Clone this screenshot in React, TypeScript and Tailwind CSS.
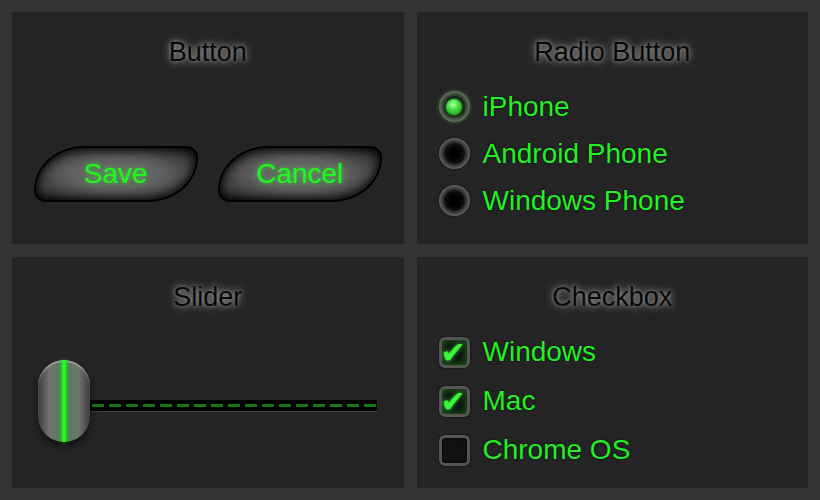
const FONT = { fontFamily: '"Liberation Sans", Arial, sans-serif' };

const titleCls =
  'text-center text-[27px] leading-[32px] text-[#080808] [text-shadow:0_0_10px_rgba(255,255,255,0.55),0_0_4px_rgba(255,255,255,0.4)]';
const greenCls =
  'text-[28px] leading-[32px] text-[#25f025] [text-shadow:0_0_2px_rgba(0,0,0,0.9)]';

function Panel({ title, children }: { title: string; children: React.ReactNode }) {
  return (
    <div className="bg-[#242424] pt-6 flex flex-col">
      <div className={titleCls}>{title}</div>
      {children}
    </div>
  );
}

function FancyButton({ label }: { label: string }) {
  return (
    <button className="w-[164px] h-[56px] rounded-[52px_12px_52px_12px/46px_12px_46px_12px] border-2 border-black bg-[radial-gradient(ellipse_at_center,#6c6c6c_0%,#606060_40%,#3a3a3a_75%,#1a1a1a_100%)] shadow-[inset_0_0_10px_2px_rgba(0,0,0,0.85)] flex items-center justify-center">
      <span className="text-[28px] text-[#1ff51f] [text-shadow:0_0_5px_rgba(40,255,40,0.7)]">{label}</span>
    </button>
  );
}

function Radio({ label, checked }: { label: string; checked?: boolean }) {
  return (
    <div className="flex items-center gap-[13px] h-[47px]">
      <div
        className={
          checked
            ? 'w-[31px] h-[31px] rounded-full p-[5px] bg-[radial-gradient(circle,#3d4a3a_55%,#6f7f6b_75%,#4a5846_100%)] shadow-[0_0_4px_rgba(120,200,110,0.35)]'
            : 'w-[31px] h-[31px] rounded-full p-[5px] bg-[radial-gradient(circle,#3a3a3a_55%,#6e6e6e_75%,#474747_100%)] shadow-[0_0_2px_#000]'
        }
      >
        <div
          className={
            checked
              ? 'w-full h-full rounded-full bg-[radial-gradient(circle,#1c2a1a_40%,#0c120b_100%)] flex items-center justify-center shadow-[0_0_2px_#000]'
              : 'w-full h-full rounded-full bg-[radial-gradient(circle,#000_30%,#1e1e1e_100%)] shadow-[0_0_2px_#000]'
          }
        >
          {checked && (
            <div className="w-[16px] h-[16px] rounded-full bg-[radial-gradient(circle_at_45%_35%,#b8ffb0_0%,#4ee04a_35%,#1ea31a_80%,#137a10_100%)] shadow-[0_0_3px_rgba(60,255,60,0.6)]" />
          )}
        </div>
      </div>
      <span className={greenCls}>{label}</span>
    </div>
  );
}

function Check({ label, checked }: { label: string; checked?: boolean }) {
  return (
    <div className="flex items-center gap-[13px] h-[49px]">
      <div
        className={
          checked
            ? 'relative w-[31px] h-[31px] rounded-[6px] border-[3px] border-[#555] bg-[#0f150f] shadow-[inset_0_0_7px_rgba(50,220,50,0.45),0_0_2px_#000]'
            : 'relative w-[31px] h-[31px] rounded-[6px] border-[3px] border-[#555] bg-[#111] shadow-[inset_0_0_3px_#000,0_0_2px_#000]'
        }
      >
        {checked && (
          <span
            className="absolute left-[-1px] top-[-4px] text-[30px] leading-[34px] italic text-[#3cf53c] [text-shadow:0_0_4px_rgba(60,255,60,0.8)]"
            style={{ fontFamily: '"DejaVu Sans", sans-serif' }}
          >
            ✔
          </span>
        )}
      </div>
      <span className={greenCls}>{label}</span>
    </div>
  );
}

export default function App() {
  return (
    <div className="w-[820px] h-[500px] bg-[#333333] p-3 grid grid-cols-2 grid-rows-2 gap-[13px]" style={FONT}>
      <Panel title="Button">
        <div className="flex justify-center gap-5 mt-[78px]">
          <FancyButton label="Save" />
          <FancyButton label="Cancel" />
        </div>
      </Panel>

      <Panel title="Radio Button">
        <div className="flex flex-col pl-[22px] mt-[15px]">
          <Radio label="iPhone" checked />
          <Radio label="Android Phone" />
          <Radio label="Windows Phone" />
        </div>
      </Panel>

      <Panel title="Slider">
        <div className="flex items-center pl-[26px] pr-[27px] mt-[47px]">
          <div className="relative z-10 w-[52px] h-[82px] rounded-[26px] bg-[linear-gradient(90deg,#3e3e3e_0%,#727272_22%,#557e55_42%,#557e55_58%,#727272_78%,#3e3e3e_100%)] shadow-[0_4px_6px_rgba(0,0,0,0.6),inset_0_2px_1px_rgba(255,255,255,0.3)] flex justify-center">
            <div className="w-[4px] h-full bg-[#1aff1a] shadow-[0_0_4px_rgba(30,255,30,0.8)]" />
          </div>
          <div className="flex-1 mt-[10px] h-[11px] bg-black rounded-r-[2px] flex items-center shadow-[0_1px_0_rgba(255,255,255,0.12)]">
            <div className="w-full h-[3px] ml-[2px] bg-[repeating-linear-gradient(90deg,#0f7a0f_0_12px,transparent_12px_17px)]" />
          </div>
        </div>
      </Panel>

      <Panel title="Checkbox">
        <div className="flex flex-col pl-[22px] mt-[15px]">
          <Check label="Windows" checked />
          <Check label="Mac" checked />
          <Check label="Chrome OS" />
        </div>
      </Panel>
    </div>
  );
}
